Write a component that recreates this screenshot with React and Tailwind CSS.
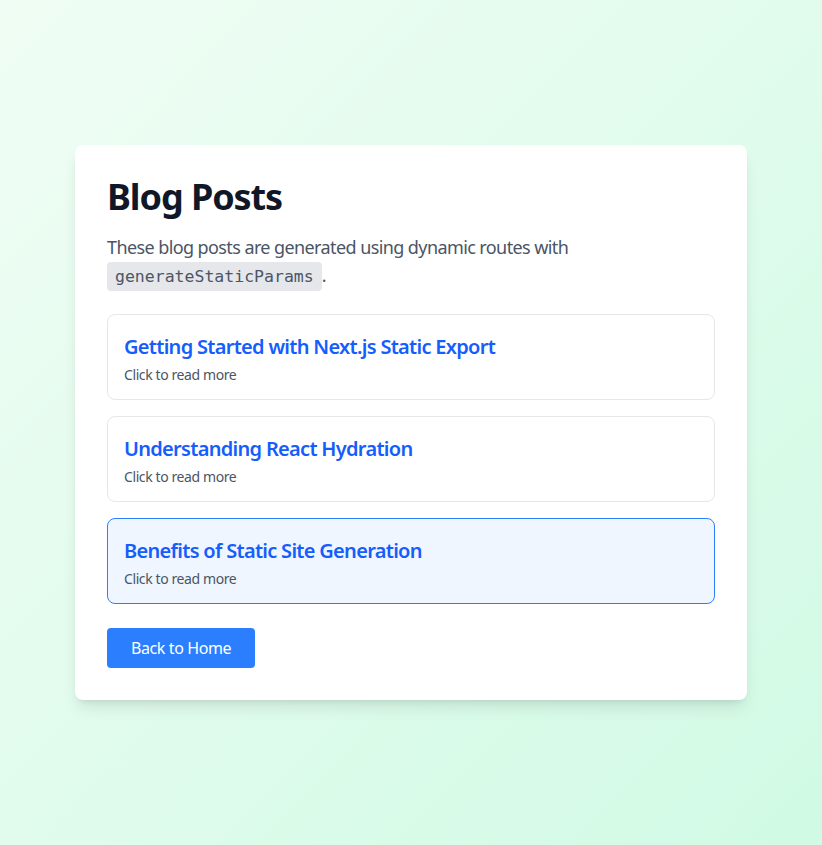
import React from 'react';

const posts = [
  { slug: 'getting-started', title: 'Getting Started with Next.js Static Export' },
  { slug: 'react-hydration', title: 'Understanding React Hydration' },
  { slug: 'static-site-generation', title: 'Benefits of Static Site Generation', active: true },
];

export default function App() {
  return (
    <div className="min-h-screen flex items-center justify-center bg-gradient-to-br from-green-50 to-emerald-100 font-['Noto_Sans',sans-serif] tracking-tight">
      <div className="w-[672px] bg-white rounded-lg shadow-lg p-8">
        <h1 className="text-4xl font-bold text-gray-900 mb-4 tracking-[-0.03em]">Blog Posts</h1>
        <p className="text-lg text-gray-600 mb-6 tracking-[-0.033em]">
          These blog posts are generated using dynamic routes with{' '}
          <code className="bg-gray-200 px-2 py-[5px] rounded font-['DejaVu_Sans_Mono',monospace] text-[16.5px] tracking-normal">generateStaticParams</code>.
        </p>

        {/* Post list */}
        <div className="space-y-4 mb-6">
          {posts.map((post) => (
            <a
              key={post.slug}
              href="#"
              className={
                post.active
                  ? 'block px-4 pt-[18px] pb-[14px] border border-blue-500 bg-blue-50 rounded-lg'
                  : 'block px-4 pt-[18px] pb-[14px] border border-gray-200 rounded-lg'
              }
            >
              <h2 className="text-xl font-semibold text-blue-600 tracking-[-0.035em]">{post.title}</h2>
              <p className="text-sm text-gray-600 mt-1">Click to read more</p>
            </a>
          ))}
        </div>

        <button className="bg-blue-500 text-white px-6 py-2 rounded">Back to Home</button>
      </div>
    </div>
  );
}
